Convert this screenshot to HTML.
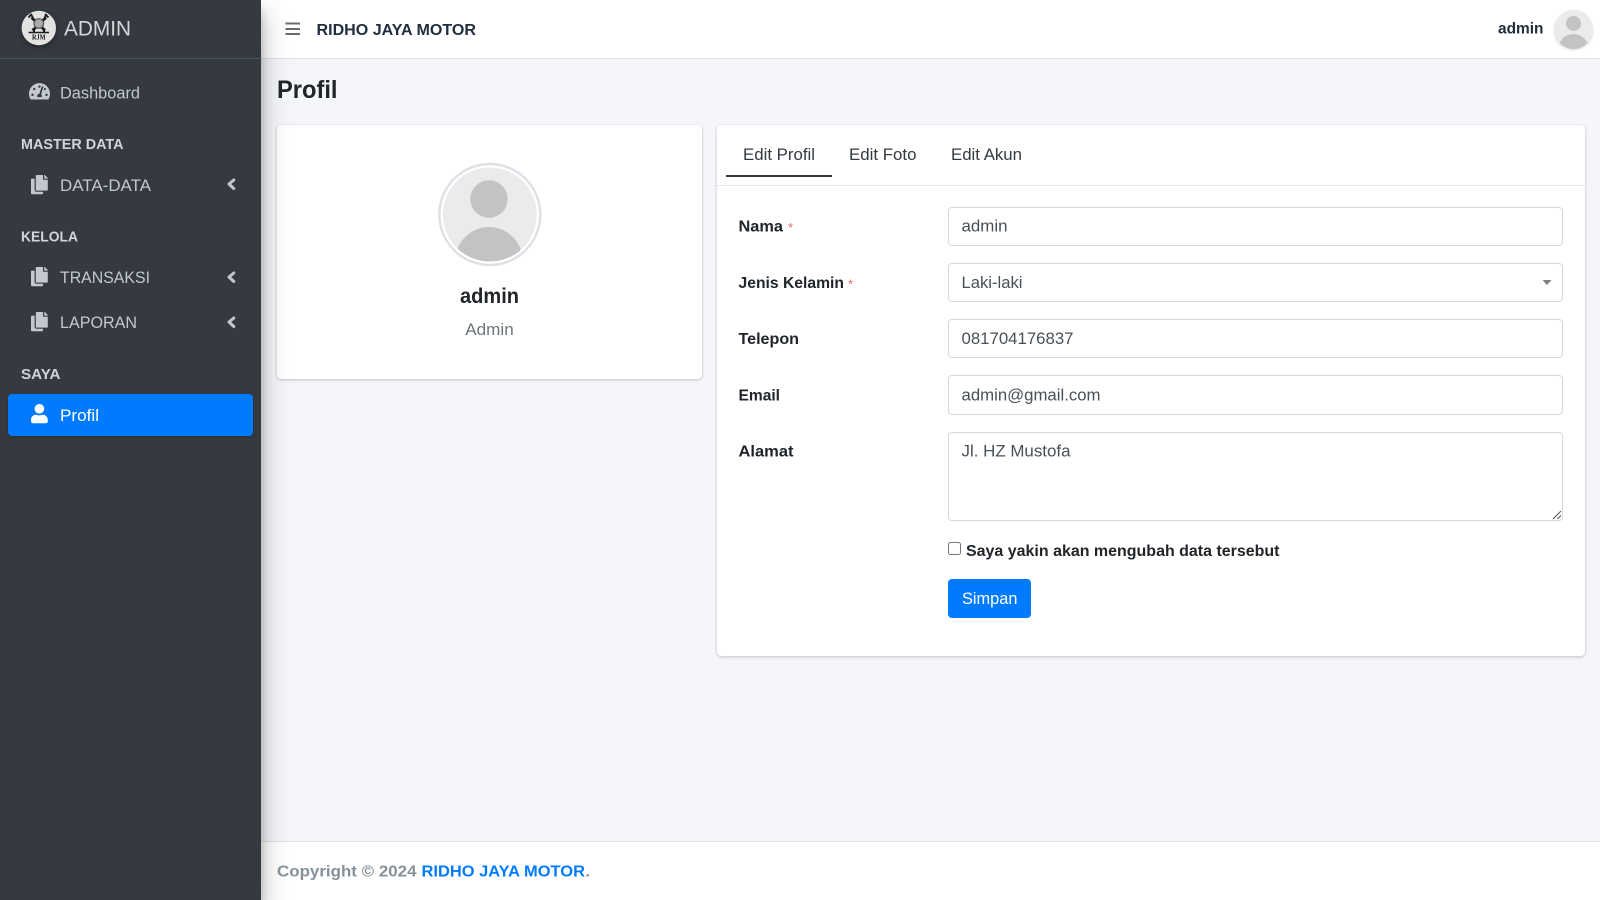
<!DOCTYPE html>
<html lang="id">
<head>
<meta charset="utf-8">
<title>Profil</title>
<style>
html,body{margin:0;padding:0;width:1600px;height:900px;overflow:hidden;background:#f4f6f9;font-family:"Liberation Sans",sans-serif}
div{position:absolute;box-sizing:border-box}
.card{background:#fff;border-radius:4px;box-shadow:0 0 1px rgba(0,0,0,.125),0 1px 3px rgba(0,0,0,.2)}
.inp{background:#fff;border:1px solid #d3d8dd;border-radius:4px;left:948px;width:615px}
svg{position:absolute;left:0;top:0}
</style>
</head>
<body>
<div style="left:261px;top:0;width:1339px;height:59px;background:#fff;border-bottom:1px solid #dee2e6"></div>
<div style="left:261px;top:841px;width:1339px;height:59px;background:#fff;border-top:1px solid #dee2e6"></div>

<div class="card" style="left:277px;top:125px;width:425px;height:254px"></div>
<div class="card" style="left:717px;top:125px;width:868px;height:531px"></div>
<div style="left:717px;top:185px;width:868px;height:1px;background:#e3e6ea"></div>
<div style="left:726px;top:175px;width:106px;height:2px;background:#343a40"></div>

<div class="inp" style="top:207px;height:39px"></div>
<div class="inp" style="top:263px;height:39px"></div>
<div class="inp" style="top:319px;height:39px"></div>
<div class="inp" style="top:375px;height:40px"></div>
<div class="inp" style="top:432px;height:89px"></div>
<div style="left:948px;top:542px;width:13px;height:13px;background:#fff;border:1px solid #767676;border-radius:2.5px"></div>
<div style="left:948px;top:579px;width:83px;height:39px;background:#007bff;border-radius:4px"></div>

<div style="left:0;top:0;width:261px;height:900px;background:#343a40;box-shadow:0 14px 28px rgba(0,0,0,.25),0 10px 10px rgba(0,0,0,.22)"></div>
<div style="left:0;top:58px;width:261px;height:1px;background:#4b545c"></div>
<div style="left:8px;top:394px;width:244.500px;height:42px;background:#007bff;border-radius:4px;box-shadow:0 1px 3px rgba(0,0,0,.2)"></div>

<svg width="1600" height="900" viewBox="0 0 1600 900" xmlns="http://www.w3.org/2000/svg" font-family="'Liberation Sans',sans-serif">
  <defs>
    <path id="cp" d="M320 448v40c0 13.255-10.745 24-24 24H24c-13.255 0-24-10.745-24-24V120c0-13.255 10.745-24 24-24h72v296c0 30.879 25.121 56 56 56h168zm0-344V0H152c-13.255 0-24 10.745-24 24v368c0 13.255 10.745 24 24 24h272c13.255 0 24-10.745 24-24V128H344c-13.2 0-24-10.8-24-24zm120.971-31.029L375.029 7.029A24 24 0 0 0 358.059 0H352v96h96v-6.059a24 24 0 0 0-7.029-16.97z"/>
    <clipPath id="a1"><circle cx="490" cy="214.500" r="47"/></clipPath>
    <clipPath id="a2"><circle cx="1573.500" cy="29.500" r="19.500"/></clipPath>
  </defs>

  <!-- logo -->
  <circle cx="38.800" cy="28" r="17.200" fill="#e2e2e0" style="filter:drop-shadow(0 2px 3px rgba(0,0,0,.4))"/>
  <g stroke="#1c1c1c" fill="none">
    <path d="M31.500 17.500l13.500 13M46 17.500L32.500 30.500" stroke-width="2.800"/>
    <path d="M28.500 17.500l3-3.500M33 18l-2-4M45 14l3.500 3.500M44.500 18l2-4" stroke-width="1.800"/>
    <circle cx="38.800" cy="23.500" r="4.800" fill="#aaa" stroke="#555" stroke-width="1.200"/>
    <path d="M28.500 32.500h20.500" stroke-width="1.600"/>
    <path d="M34 30v3M44 30v3" stroke-width="2"/>
  </g>
  <text x="32" y="39.500" font-size="7" font-weight="700" font-family="'Liberation Serif',serif" fill="#111" textLength="13.500" lengthAdjust="spacingAndGlyphs">RJM</text>

  <!-- sidebar text -->
  <g fill="#c2c7d0" font-size="16.500">
    <text x="64" y="35.500" font-size="21" fill="#d5d7da" textLength="67" lengthAdjust="spacingAndGlyphs">ADMIN</text>
    <text x="60" y="98.500" textLength="80" lengthAdjust="spacingAndGlyphs">Dashboard</text>
    <text x="60" y="191" textLength="91" lengthAdjust="spacingAndGlyphs">DATA-DATA</text>
    <text x="60" y="283" textLength="90" lengthAdjust="spacingAndGlyphs">TRANSAKSI</text>
    <text x="60" y="328" textLength="77" lengthAdjust="spacingAndGlyphs">LAPORAN</text>
    <text x="60" y="421" fill="#fff" textLength="39" lengthAdjust="spacingAndGlyphs">Profil</text>
  </g>
  <g fill="#d0d4db" font-size="15" font-weight="700">
    <text x="21" y="149" textLength="102.500" lengthAdjust="spacingAndGlyphs">MASTER DATA</text>
    <text x="21" y="241.500" textLength="57" lengthAdjust="spacingAndGlyphs">KELOLA</text>
    <text x="21" y="379" textLength="39.500" lengthAdjust="spacingAndGlyphs">SAYA</text>
  </g>

  <!-- sidebar icons -->
  <path transform="translate(29 82) scale(.0365)" fill="#c2c7d0" d="M288 32C128.94 32 0 160.94 0 320c0 52.8 14.25 102.26 39.06 144.8 5.61 9.62 16.3 15.2 27.44 15.2h443c11.14 0 21.83-5.58 27.44-15.2C561.75 422.26 576 372.8 576 320c0-159.06-128.94-288-288-288zm0 64c14.71 0 26.58 10.13 30.32 23.65-1.11 2.26-2.64 4.23-3.45 6.67l-9.22 27.67c-5.13 3.49-10.97 6.01-17.65 6.01-17.67 0-32-14.33-32-32S270.33 96 288 96zM96 384c-17.67 0-32-14.33-32-32s14.33-32 32-32 32 14.33 32 32-14.33 32-32 32zm48-160c-17.67 0-32-14.33-32-32s14.33-32 32-32 32 14.33 32 32-14.33 32-32 32zm246.77-72.41l-61.33 184C343.13 347.33 352 364.54 352 384c0 11.72-3.38 22.55-8.88 32H232.88c-5.5-9.45-8.88-20.28-8.88-32 0-33.94 26.5-61.43 59.9-63.59l61.34-184.01c4.17-12.56 17.73-19.45 30.36-15.17 12.57 4.19 19.35 17.79 15.17 30.36zm14.66 57.2l15.52-46.55c3.47-1.29 7.13-2.23 11.05-2.23 17.67 0 32 14.33 32 32s-14.33 32-32 32c-11.38-.01-20.89-6.28-26.57-15.22zM480 384c-17.67 0-32-14.33-32-32s14.33-32 32-32 32 14.33 32 32-14.33 32-32 32z"/>
  <use href="#cp" transform="translate(31 175) scale(.0375)" fill="#c2c7d0"/>
  <use href="#cp" transform="translate(31 267) scale(.0375)" fill="#c2c7d0"/>
  <use href="#cp" transform="translate(31 312) scale(.0375)" fill="#c2c7d0"/>
  <path transform="translate(31 404) scale(.0375)" fill="#fff" d="M224 256c70.7 0 128-57.3 128-128S294.7 0 224 0 96 57.3 96 128s57.3 128 128 128zm89.6 32h-16.7c-22.2 10.2-46.9 16-72.9 16s-50.6-5.8-72.9-16h-16.7C60.2 288 0 348.2 0 422.4V464c0 26.5 21.500 48 48 48h352c26.500 0 48-21.500 48-48v-41.600c0-74.200-60.200-134.400-134.400-134.400z"/>
  <g fill="none" stroke="#c2c7d0" stroke-width="3" stroke-linecap="round" stroke-linejoin="round">
    <path d="M233.800 180l-4.800 4 4.800 4.500"/>
    <path d="M233.800 273l-4.800 4 4.800 4.500"/>
    <path d="M233.800 318l-4.800 4 4.800 4.500"/>
  </g>

  <!-- topbar -->
  <g fill="#666b70">
    <rect x="285.500" y="22.500" width="14.500" height="2"/>
    <rect x="285.500" y="28" width="14.500" height="2"/>
    <rect x="285.500" y="33" width="14.500" height="2"/>
  </g>
  <text x="316.500" y="35" font-size="16" font-weight="700" fill="#1f2d3d" textLength="159.500" lengthAdjust="spacingAndGlyphs">RIDHO JAYA MOTOR</text>
  <text x="1498" y="33.500" font-size="16" font-weight="700" fill="#1f2d3d" textLength="45.500" lengthAdjust="spacingAndGlyphs">admin</text>
  <circle cx="1573.500" cy="29.500" r="19.500" fill="#ebebeb" style="filter:drop-shadow(0 1px 1px rgba(0,0,0,.15))"/>
  <g clip-path="url(#a2)" fill="#c4c2c3">
    <circle cx="1573.500" cy="23.500" r="7.500"/>
    <ellipse cx="1573.500" cy="48.500" rx="15" ry="14.500"/>
  </g>

  <!-- title -->
  <text x="277" y="98" font-size="25" font-weight="700" fill="#212529" textLength="60.500" lengthAdjust="spacingAndGlyphs">Profil</text>

  <!-- profile card -->
  <circle cx="489.800" cy="214.500" r="50.500" fill="#fff" stroke="#dee2e6" stroke-width="2.500"/>
  <circle cx="489.800" cy="214.500" r="47" fill="#ebebeb"/>
  <g clip-path="url(#a1)" fill="#c4c2c3">
    <circle cx="489" cy="199" r="18.700"/>
    <ellipse cx="489" cy="262" rx="34" ry="35"/>
  </g>
  <text x="489.500" y="303" text-anchor="middle" font-size="21" font-weight="700" fill="#212529" textLength="59" lengthAdjust="spacingAndGlyphs">admin</text>
  <text x="489.500" y="335" text-anchor="middle" font-size="17" fill="#6c757d" textLength="48.500" lengthAdjust="spacingAndGlyphs">Admin</text>

  <!-- tabs -->
  <g font-size="16.500" fill="#343a40">
    <text x="743" y="160" textLength="72" lengthAdjust="spacingAndGlyphs">Edit Profil</text>
    <text x="849" y="160" textLength="67.500" lengthAdjust="spacingAndGlyphs">Edit Foto</text>
    <text x="951" y="160" textLength="71" lengthAdjust="spacingAndGlyphs">Edit Akun</text>
  </g>

  <!-- labels -->
  <g font-size="16" font-weight="700" fill="#212529">
    <text x="738.500" y="231.500" textLength="44.500" lengthAdjust="spacingAndGlyphs">Nama</text>
    <text x="738.500" y="288" textLength="105.500" lengthAdjust="spacingAndGlyphs">Jenis Kelamin</text>
    <text x="738.500" y="344" textLength="60.500" lengthAdjust="spacingAndGlyphs">Telepon</text>
    <text x="738.500" y="400.500" textLength="41.500" lengthAdjust="spacingAndGlyphs">Email</text>
    <text x="738.500" y="456.500" textLength="55" lengthAdjust="spacingAndGlyphs">Alamat</text>
    <text x="966" y="556" textLength="313.500" lengthAdjust="spacingAndGlyphs">Saya yakin akan mengubah data tersebut</text>
  </g>
  <g font-size="13" fill="#e8636f">
    <text x="788" y="232">*</text>
    <text x="848" y="288.500">*</text>
  </g>

  <!-- values -->
  <g font-size="16.500" fill="#495057">
    <text x="961.500" y="231.500" textLength="46" lengthAdjust="spacingAndGlyphs">admin</text>
    <text x="961.500" y="288" textLength="61" lengthAdjust="spacingAndGlyphs">Laki-laki</text>
    <text x="961.500" y="344" textLength="112" lengthAdjust="spacingAndGlyphs">081704176837</text>
    <text x="961.500" y="400.500" textLength="139" lengthAdjust="spacingAndGlyphs">admin@gmail.com</text>
    <text x="961.500" y="456.500" textLength="109" lengthAdjust="spacingAndGlyphs">Jl. HZ Mustofa</text>
  </g>
  <path d="M1542.500 280h9l-4.500 5z" fill="#808080"/>
  <g stroke="#555" stroke-width="1" fill="none">
    <path d="M1553 519l8-8M1557.500 519l3.500-3.500"/>
  </g>
  <text x="962" y="604" font-size="16.500" fill="#fff" textLength="55.500" lengthAdjust="spacingAndGlyphs">Simpan</text>

  <!-- footer -->
  <text x="277" y="876.500" font-size="16" font-weight="700" fill="#869099" textLength="139.500" lengthAdjust="spacingAndGlyphs">Copyright © 2024</text>
  <text x="421.500" y="876.500" font-size="16" font-weight="700" fill="#007bff" textLength="163.500" lengthAdjust="spacingAndGlyphs">RIDHO JAYA MOTOR</text>
  <text x="585.500" y="876.500" font-size="16" font-weight="700" fill="#869099">.</text>
</svg>
</body>
</html>
